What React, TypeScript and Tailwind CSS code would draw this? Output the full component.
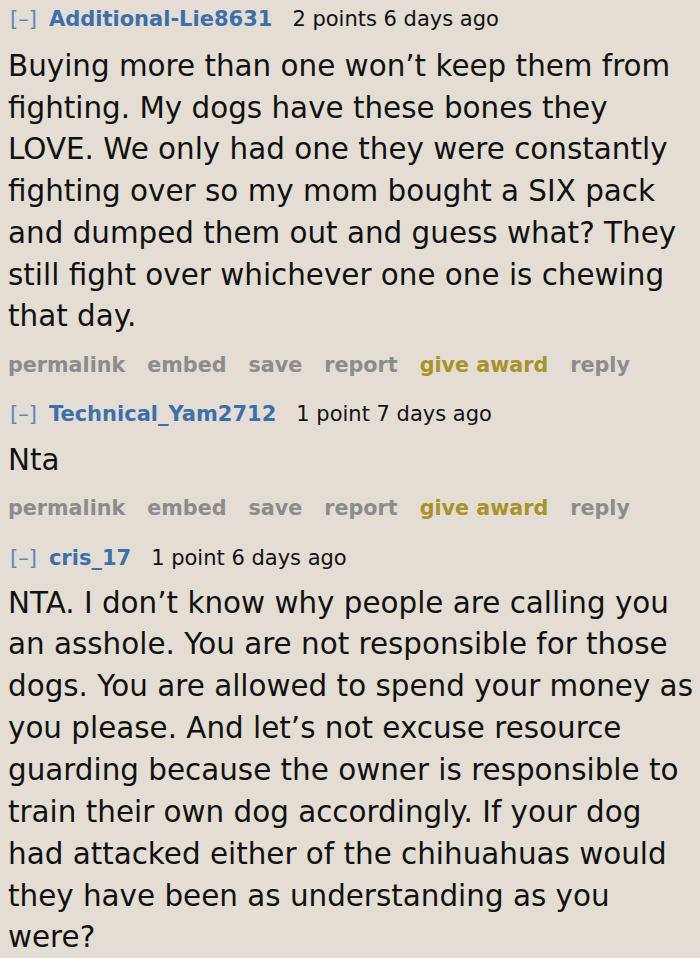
import React from "react";

const font = { fontFamily: '"DejaVu Sans", Verdana, sans-serif' };

function Header({ user, meta }: { user: string; meta: string }) {
  return (
    <div className="flex items-baseline text-[21px] leading-[24px] h-[24px]">
      <span className="text-[#5d87bd] ml-[2px]">[–]</span>
      <span className="ml-[12px] font-bold text-[#3d6fa8]">{user}</span>
      <span className="ml-[20px] text-[#111]">{meta}</span>
    </div>
  );
}

function Actions() {
  return (
    <div className="flex items-baseline gap-[22px] font-bold text-[20.7px] leading-[26px] text-[#8c8c8c]">
      <span>permalink</span>
      <span>embed</span>
      <span>save</span>
      <span>report</span>
      <span className="text-[#a8922b]">give award</span>
      <span>reply</span>
    </div>
  );
}

export default function App() {
  return (
    <div className="w-[700px] h-[958px] bg-[#e3ddd4] overflow-hidden pl-[8px]" style={font}>
      <div className="pt-[7px]">
        <Header user="Additional-Lie8631" meta="2 points 6 days ago" />
      </div>
      <p className="mt-[15px] text-[29.4px] leading-[41.7px] text-[#111] pr-[4px]">
        Buying more than one won’t keep them from fighting. My dogs have these bones they LOVE. We only had one they were constantly fighting over so my mom bought a SIX pack and dumped them out and guess what? They still fight over whichever one one is chewing that day.
      </p>
      <div className="mt-[14px]">
        <Actions />
      </div>
      <div className="mt-[24px]">
        <Header user="Technical_Yam2712" meta="1 point 7 days ago" />
      </div>
      <p className="mt-[14px] text-[29.4px] leading-[41.7px] text-[#111]">Nta</p>
      <div className="mt-[13px]">
        <Actions />
      </div>
      <div className="mt-[25px]">
        <Header user="cris_17" meta="1 point 6 days ago" />
      </div>
      <p className="mt-[13px] text-[29.4px] leading-[41.85px] text-[#111] pr-[4px]">
        NTA. I don’t know why people are calling you an asshole. You are not responsible for those dogs. You are allowed to spend your money as you please. And let’s not excuse resource guarding because the owner is responsible to train their own dog accordingly. If your dog had attacked either of the chihuahuas would they have been as understanding as you were?
      </p>
    </div>
  );
}
